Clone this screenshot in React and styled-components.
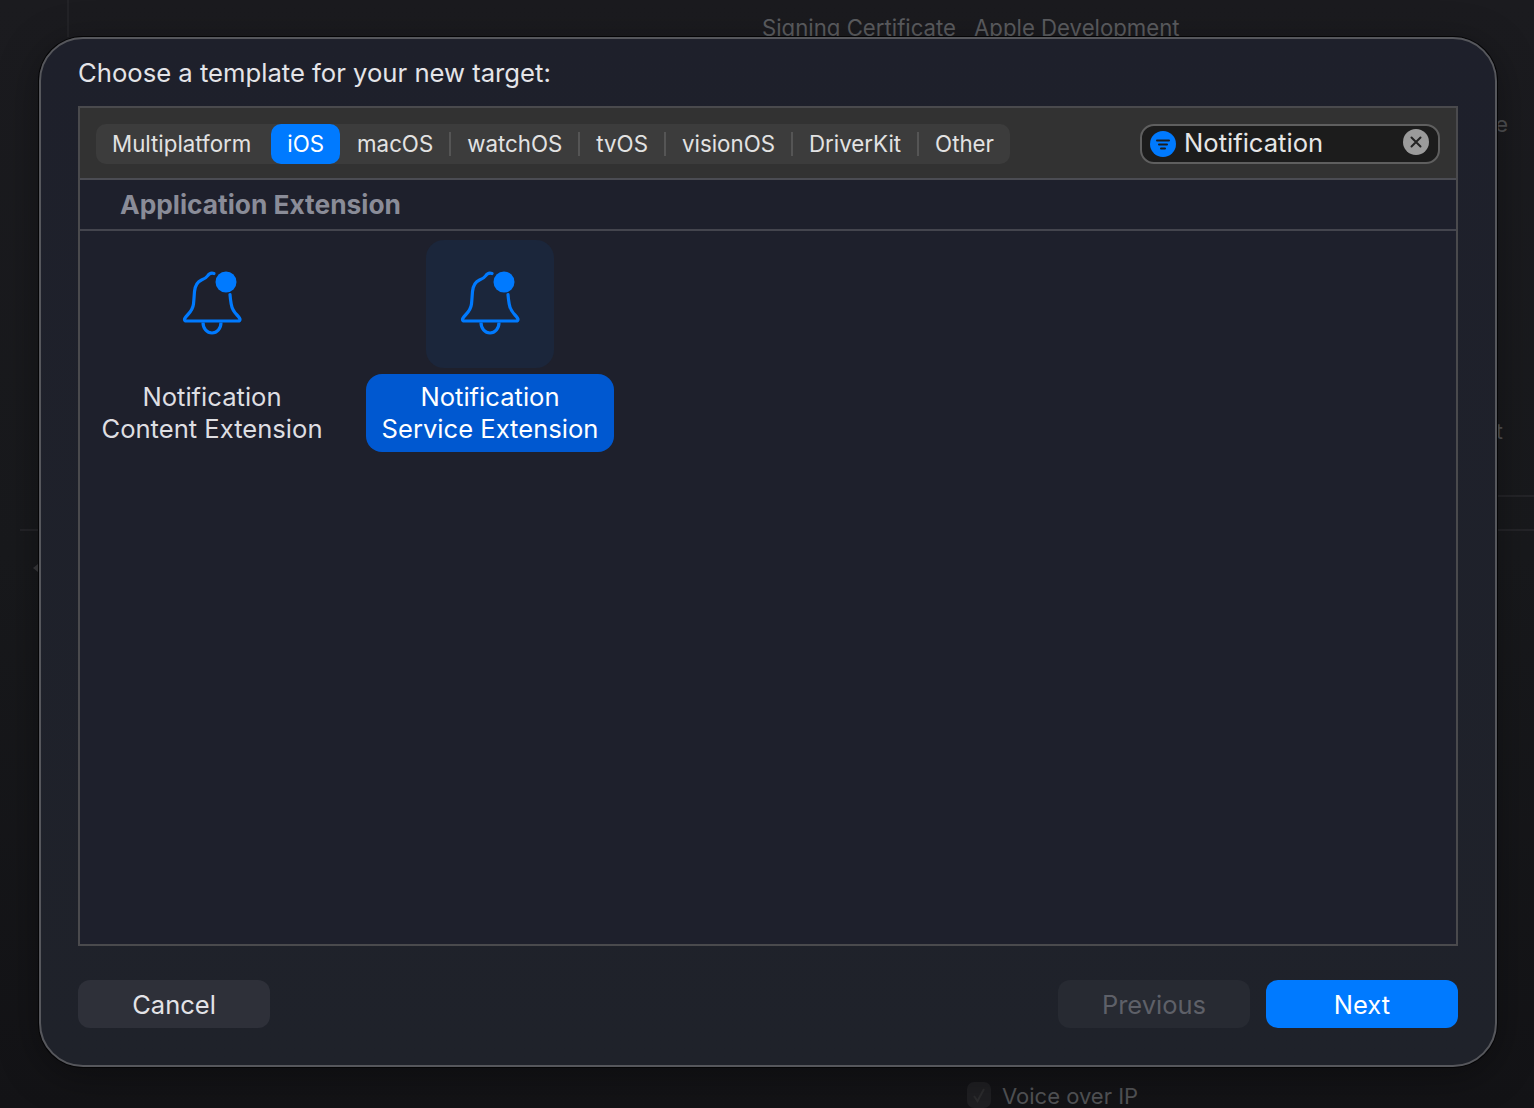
import React from "react";
import styled, { createGlobalStyle } from "styled-components";

const GlobalStyle = createGlobalStyle`
  html, body {
    margin: 0;
    padding: 0;
    background: #18181b;
  }
  * {
    box-sizing: border-box;
  }
`;

const platforms = [
  { name: "Multiplatform" },
  { name: "iOS", active: true },
  { name: "macOS", divider: true },
  { name: "watchOS", divider: true },
  { name: "tvOS", divider: true },
  { name: "visionOS", divider: true },
  { name: "DriverKit", divider: true },
  { name: "Other" },
];

const templates = [
  { id: "content", lines: ["Notification", "Content Extension"] },
  { id: "service", lines: ["Notification", "Service Extension"], selected: true },
];

const BellIcon = () => (
  <svg width="128" height="128" viewBox="0 0 128 128" fill="none">
    <path
      d="M66 33.500c-2.500-.8-5 .2-6.500 2.500-1.500 2.200-3.500 3-6 4-4.500 2-6.500 6-7 11.500-.4 5-.6 9-1 12.500-.6 5-3 8-6 11-1.500 1.500-3 3-3 4.500 0 1 .8 1.500 2 1.500h51.500c1.200 0 2-.5 2-1.500 0-1.500-1.500-3-3-4.500-3-3-5-6-5.800-11-.6-3.500-1-6.500-1.200-9.500"
      stroke="#007aff"
      strokeWidth="3.200"
      strokeLinecap="round"
      strokeLinejoin="round"
    />
    <path
      d="M55 82.500c0 6 4 10.500 9 10.500s9-4.500 9-10.500"
      stroke="#007aff"
      strokeWidth="3.200"
    />
    <circle cx="78" cy="42" r="10.500" fill="#007aff" />
  </svg>
);

const FilterIcon = () => (
  <svg width="26" height="26" viewBox="0 0 26 26">
    <circle cx="13" cy="13" r="13" fill="#007aff" />
    <path
      d="M7 9.500h12M9 13.500h8M11 17.500h4"
      stroke="#1c1c1e"
      strokeWidth="2"
      strokeLinecap="round"
    />
  </svg>
);

const ClearIcon = () => (
  <svg width="26" height="26" viewBox="0 0 26 26">
    <circle cx="13" cy="13" r="13" fill="#9b9b9b" />
    <path
      d="M8.500 8.500l9 9M17.500 8.500l-9 9"
      stroke="#232323"
      strokeWidth="2"
      strokeLinecap="round"
    />
  </svg>
);

const App = () => {
  return (
    <>
      <GlobalStyle />
      <Screen>
        <Backdrop>
          <TopBar>
            <Ghost>Signing Certificate</Ghost>
            <Ghost>Apple Development</Ghost>
          </TopBar>
          <EdgeLetter $top={67} $inset={26}>e</EdgeLetter>
          <EdgeLetter $top={267} $inset={31}>t</EdgeLetter>
          <RightRule $top={44} />
          <RuleRow>
            <LeftRule />
            <RightRule $top={0} />
          </RuleRow>
          <Caret />
          <VoiceRow>
            <GhostCheck>
              <svg width="14" height="16" viewBox="0 0 14 16" fill="none">
                <path d="M2 9l3.500 5L12 2" stroke="#2c2c2e" strokeWidth="2" />
              </svg>
            </GhostCheck>
            <VoiceText>Voice over IP</VoiceText>
          </VoiceRow>
        </Backdrop>

        <Sheet>
          <Title>Choose a template for your new target:</Title>
          <Chooser>
            <Toolbar>
              <Segments>
                {platforms.map((p) => (
                  <React.Fragment key={p.name}>
                    <Segment $active={p.active}>{p.name}</Segment>
                    {p.divider && <SegmentDivider />}
                  </React.Fragment>
                ))}
              </Segments>
              <SearchField>
                <FilterIcon />
                <SearchText>Notification</SearchText>
                <ClearSlot>
                  <ClearIcon />
                </ClearSlot>
              </SearchField>
            </Toolbar>
            <SectionHeader>Application Extension</SectionHeader>
            <TemplateGrid>
              {templates.map((t) => (
                <Template key={t.id}>
                  <IconTile $selected={t.selected}>
                    <BellIcon />
                  </IconTile>
                  <TemplateLabel $selected={t.selected}>
                    {t.lines.map((line) => (
                      <span key={line}>{line}</span>
                    ))}
                  </TemplateLabel>
                </Template>
              ))}
            </TemplateGrid>
          </Chooser>
          <Footer>
            <Button>Cancel</Button>
            <FooterRight>
              <Button $disabled>Previous</Button>
              <Button $primary>Next</Button>
            </FooterRight>
          </Footer>
        </Sheet>
      </Screen>
    </>
  );
};

const Screen = styled.div`
  position: relative;
  width: 1534px;
  height: 1108px;
  overflow: hidden;
  background: linear-gradient(180deg, #1b1b1f 0%, #18191c 50%, #131316 100%);
  font-family: Inter, "Liberation Sans", sans-serif;
`;

const Backdrop = styled.div`
  display: flex;
  flex-direction: column;
  height: 100%;
`;

const TopBar = styled.div`
  display: flex;
  gap: 18px;
  height: 37px;
  margin-left: 67px;
  padding: 12px 0 0 693px;
  border-left: 2px solid #232327;
`;

const Ghost = styled.span`
  font-size: 22.200px;
  line-height: 32px;
  color: #5c5d60;
  white-space: nowrap;
`;

const EdgeLetter = styled.div`
  margin-top: ${(p) => p.$top}px;
  padding-right: ${(p) => p.$inset}px;
  text-align: right;
  font-size: 22px;
  line-height: 40px;
  color: #4f5053;
`;

const RightRule = styled.div`
  width: 37px;
  height: 2px;
  margin-top: ${(p) => p.$top}px;
  margin-left: auto;
  background: #242428;
`;

const RuleRow = styled.div`
  display: flex;
  align-items: flex-start;
  margin-top: 32px;
`;

const LeftRule = styled.div`
  width: 18px;
  height: 2px;
  margin-left: 20px;
  background: #242428;
`;

const Caret = styled.div`
  width: 0;
  height: 0;
  margin: 33px 0 0 33px;
  border-top: 4px solid transparent;
  border-bottom: 4px solid transparent;
  border-right: 5px solid #3a3a3d;
`;

const VoiceRow = styled.div`
  display: flex;
  align-items: center;
  gap: 11px;
  margin-top: auto;
  padding-left: 967px;
`;

const VoiceText = styled.span`
  padding-top: 2px;
  font-size: 22px;
  line-height: 24px;
  color: #525356;
  white-space: nowrap;
`;

const GhostCheck = styled.div`
  display: flex;
  align-items: center;
  justify-content: center;
  width: 24px;
  height: 26px;
  border-radius: 7px;
  background: #1f1f22;
`;

const Sheet = styled.div`
  position: absolute;
  left: 39px;
  top: 37px;
  display: flex;
  flex-direction: column;
  width: 1458px;
  height: 1030px;
  padding: 0 37px;
  border: 2px solid #56575c;
  border-radius: 44px;
  background: linear-gradient(180deg, #1e202b 0%, #1f222a 100%);
  box-shadow: 0 0 0 1px #050506, 0 8px 40px rgba(0, 0, 0, 0.35);
`;

const Title = styled.h1`
  margin: 18px 0 17px;
  font-size: 25.650px;
  font-weight: 400;
  line-height: 32px;
  color: #e4e4e8;
`;

const Chooser = styled.div`
  display: flex;
  flex-direction: column;
  height: 840px;
  border: 2px solid #4a4a4d;
  background: #1e202c;
`;

const Toolbar = styled.div`
  display: flex;
  align-items: center;
  justify-content: space-between;
  height: 72px;
  padding: 2px 16px 0;
  border-bottom: 2px solid #4b4c53;
  background: #323232;
`;

const Segments = styled.div`
  display: flex;
  align-items: center;
  height: 40px;
  border-radius: 10px;
  background: #3c3c3c;
`;

const Segment = styled.div`
  display: flex;
  align-items: center;
  height: 40px;
  margin: ${(p) => (p.$active ? "0 1px 0 4px" : "0")};
  padding: 0 16px 2px;
  border-radius: 10px;
  font-size: 22.300px;
  color: ${(p) => (p.$active ? "#ffffff" : "#e2e2e2")};
  background: ${(p) => (p.$active ? "#007aff" : "transparent")};
`;

const SegmentDivider = styled.div`
  width: 2px;
  height: 24px;
  background: #555555;
`;

const SearchField = styled.div`
  display: flex;
  align-items: center;
  gap: 8px;
  width: 300px;
  height: 40px;
  padding: 0 9px 0 8px;
  border: 2px solid #5f5f5f;
  border-radius: 14px;
  background: #1c1c1c;
`;

const SearchText = styled.span`
  flex: 1;
  padding-bottom: 3px;
  font-size: 25.600px;
  color: #e6e6e6;
`;

const ClearSlot = styled.div`
  display: flex;
  margin-top: -4px;
`;

const SectionHeader = styled.div`
  height: 51px;
  padding-left: 40px;
  border-bottom: 2px solid #44454e;
  font-size: 26.300px;
  font-weight: 700;
  line-height: 49px;
  color: #8a8c98;
`;

const TemplateGrid = styled.div`
  display: flex;
  gap: 30px;
  padding: 9px 0 0 8px;
`;

const Template = styled.div`
  display: flex;
  flex-direction: column;
  align-items: center;
  gap: 6px;
  width: 248px;
`;

const IconTile = styled.div`
  width: 128px;
  height: 128px;
  border-radius: 18px;
  background: ${(p) => (p.$selected ? "#1b263b" : "transparent")};
`;

const TemplateLabel = styled.div`
  display: flex;
  flex-direction: column;
  align-items: center;
  width: 100%;
  height: 78px;
  padding-top: 7px;
  border-radius: 16px;
  font-size: 25.600px;
  line-height: 32px;
  white-space: nowrap;
  color: ${(p) => (p.$selected ? "#ffffff" : "#dedee2")};
  background: ${(p) => (p.$selected ? "#0058d0" : "transparent")};
`;

const Footer = styled.div`
  display: flex;
  justify-content: space-between;
  margin-top: 34px;
`;

const FooterRight = styled.div`
  display: flex;
  gap: 16px;
`;

const buttonBg = (p) => {
  if (p.$primary) return "#007aff";
  if (p.$disabled) return "#272a32";
  return "#2e3039";
};

const buttonColor = (p) => {
  if (p.$primary) return "#ffffff";
  if (p.$disabled) return "#5e6068";
  return "#e3e3e7";
};

const Button = styled.div`
  display: flex;
  align-items: center;
  justify-content: center;
  width: 192px;
  height: 48px;
  border-radius: 12px;
  font-size: 25.500px;
  color: ${buttonColor};
  background: ${buttonBg};
`;

export default App;
